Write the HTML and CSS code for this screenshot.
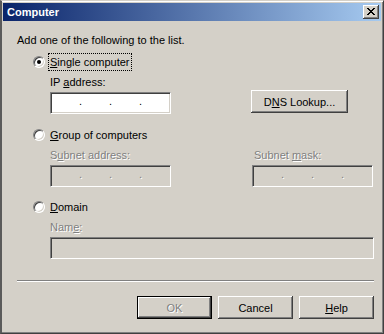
FILE: index.html
```html
<!DOCTYPE html>
<html lang="en">
<head>
  <meta charset="UTF-8">
  <title>Computer</title>
  <link rel="stylesheet" href="styles.css">
</head>
<body>
  <div class="window">
    <div class="titlebar">
      <span class="title">Computer</span>
      <span class="close">
        <svg width="16" height="14" viewBox="0 0 16 14" shape-rendering="crispEdges">
          <path fill="#000" d="M4 3h2v1h-2z M10 3h2v1h-2z M5 4h2v1h-2z M9 4h2v1h-2z M6 5h4v1h-4z M7 6h2v1h-2z M6 7h4v1h-4z M5 8h2v1h-2z M9 8h2v1h-2z M4 9h2v1h-2z M10 9h2v1h-2z"/>
        </svg>
      </span>
    </div>

    <div class="content">
      <p class="intro">Add one of the following to the list.</p>

      <div class="option">
        <span class="radio checked"></span>
        <span class="caption focus"><u>S</u>ingle computer</span>
      </div>
      <div class="fields">
        <div class="field">
          <span class="label">IP <u>a</u>ddress:</span>
          <div class="ipbox"><span class="dot">.</span><span class="dot">.</span><span class="dot">.</span></div>
        </div>
        <div class="field field-end">
          <button class="btn dns">D<u>N</u>S Lookup...</button>
        </div>
      </div>

      <div class="option spaced">
        <span class="radio"></span>
        <span class="caption"><u>G</u>roup of computers</span>
      </div>
      <div class="fields">
        <div class="field">
          <span class="label disabled">S<u>u</u>bnet address:</span>
          <div class="ipbox off"><span class="dot">.</span><span class="dot">.</span><span class="dot">.</span></div>
        </div>
        <div class="field">
          <span class="label disabled mask">Subnet <u>m</u>ask:</span>
          <div class="ipbox off"><span class="dot">.</span><span class="dot">.</span><span class="dot">.</span></div>
        </div>
      </div>

      <div class="option spaced last">
        <span class="radio"></span>
        <span class="caption"><u>D</u>omain</span>
      </div>
      <div class="fields single">
        <div class="field">
          <span class="label disabled">Nam<u>e</u>:</span>
          <div class="textbox off"></div>
        </div>
      </div>

      <div class="separator"></div>

      <div class="actions">
        <button class="btn default disabled">OK</button>
        <button class="btn">Cancel</button>
        <button class="btn"><u>H</u>elp</button>
      </div>
    </div>
  </div>
</body>
</html>
```

FILE: styles.css
```css
body {
  margin: 0;
  background-color: #d4d0c8;
  font-family: "Liberation Sans", Arial, sans-serif;
  font-size: 11px;
  color: #000;
}

.window {
  box-sizing: border-box;
  width: 384px;
  height: 334px;
  border-style: solid;
  border-width: 1px 1px 1px 2px;
  border-color: #d4d0c8 #404040 #404040 #5a5a5a;
  box-shadow: inset 0 1px #fff, inset -1px -1px #808080;
  padding: 2px 2px 2px 1px;
  display: flex;
  flex-direction: column;
}

.titlebar {
  height: 18px;
  display: flex;
  align-items: center;
  justify-content: space-between;
  padding: 0 2px 0 4px;
  background: linear-gradient(to right, #0a246a, #a6caf0);
}

.title {
  color: #fff;
  font-weight: bold;
  font-size: 11px;
}

.close {
  display: block;
  width: 16px;
  height: 14px;
  background-color: #d4d0c8;
  box-shadow: inset -1px -1px #404040, inset 1px 1px #fff, inset -2px -2px #808080;
}

.close svg {
  display: block;
}

.content {
  padding: 13px 7px 0 14px;
}

.intro {
  margin: 0;
  line-height: 13px;
}

.option {
  display: flex;
  align-items: center;
  height: 18px;
  margin-top: 6px;
  padding-left: 16px;
}

.option.spaced {
  margin-top: 12px;
}

.option.last {
  margin-top: 11px;
}

.radio {
  position: relative;
  box-sizing: border-box;
  width: 12px;
  height: 12px;
  border-radius: 50%;
  border: 1px solid;
  border-color: #808080 #fff #fff #808080;
  box-shadow: inset 1px 1px #404040, inset -1px -1px #d4d0c8;
  background-color: #fff;
  margin-right: 3px;
}

.radio.checked::after {
  content: "";
  position: absolute;
  left: 3px;
  top: 3px;
  width: 4px;
  height: 4px;
  border-radius: 50%;
  background-color: #000;
}

.caption {
  line-height: 14px;
  padding: 1px;
  border: 1px solid transparent;
}

.caption.focus {
  border: 1px dotted #000;
}

.fields {
  display: grid;
  grid-template-columns: 121px 121px;
  column-gap: 81px;
  margin: 5px 0 0 33px;
}

.fields.single {
  grid-template-columns: 1fr;
}

.field {
  display: flex;
  flex-direction: column;
}

.field-end {
  justify-content: flex-end;
}

.label {
  line-height: 13px;
  margin-bottom: 3px;
}

.label.mask {
  padding-left: 2px;
}

.disabled {
  color: #808080;
  text-shadow: 1px 1px 0 #fff;
}

.ipbox,
.textbox {
  box-sizing: border-box;
  height: 22px;
  border: 1px solid;
  border-color: #808080 #fff #fff #808080;
  box-shadow: inset 1px 1px #404040, inset -1px -1px #d4d0c8;
  background-color: #fff;
}

.ipbox {
  display: flex;
  gap: 27px;
  padding-left: 28px;
  line-height: 17px;
}

.ipbox .dot {
  width: 3px;
  font-size: 11px;
}

.ipbox.off,
.textbox.off {
  background-color: #d4d0c8;
}

.ipbox.off .dot {
  color: #808080;
  text-shadow: 1px 1px 0 #fff;
}

.btn {
  box-sizing: border-box;
  width: 75px;
  height: 23px;
  padding: 0;
  border: none;
  background-color: #d4d0c8;
  font-family: "Liberation Sans", Arial, sans-serif;
  font-size: 11px;
  color: #000;
  box-shadow: inset -1px -1px #404040, inset 1px 1px #fff, inset -2px -2px #808080;
}

.btn.dns {
  width: 97px;
  margin: 0 0 1px -1px;
}

.btn.default {
  border: 1px solid #000;
}

.btn.disabled {
  color: #808080;
  text-shadow: 1px 1px 0 #fff;
}

.separator {
  margin-top: 21px;
  border-top: 1px solid #808080;
  border-bottom: 1px solid #fff;
}

.actions {
  display: flex;
  justify-content: flex-end;
  gap: 6px;
  margin-top: 14px;
}
```
